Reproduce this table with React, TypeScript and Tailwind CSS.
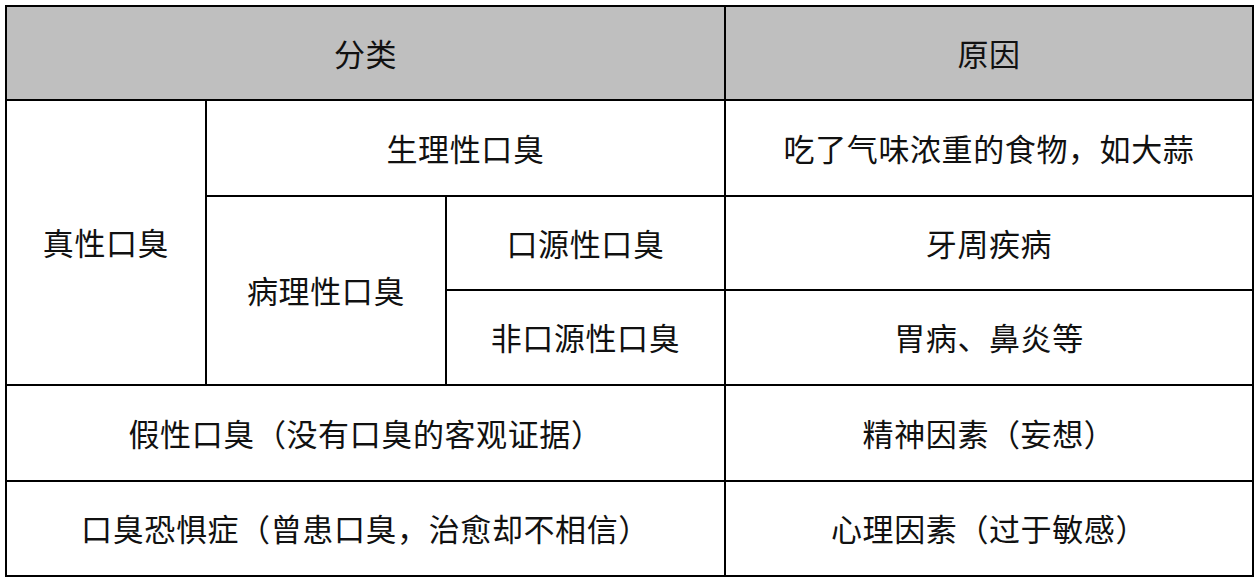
import React from "react";

const cell = "bg-white flex items-center justify-center text-[31px] tracking-[0.6px] text-[#111]";
const head = "bg-[#bfbfbf] flex items-center justify-center text-[31px] tracking-[0.6px] text-[#111]";

export default function App() {
  return (
    <div className="w-[1260px] h-[582px] bg-white p-[5px]" style={{ fontFamily: '"Noto Sans CJK SC", "Noto Sans", sans-serif' }}>
      <div className="grid w-[1249px] bg-black p-[2px] gap-[2px] grid-cols-[198px_238px_277px_526px] grid-rows-[92px_94px_92px_93px_94px_93px]">
        <div className={`${head} col-span-3`}>分类</div>
        <div className={head}>原因</div>

        <div className={`${cell} row-span-3`}>真性口臭</div>
        <div className={`${cell} col-span-2`}>生理性口臭</div>
        <div className={cell}>吃了气味浓重的食物，如大蒜</div>

        <div className={`${cell} row-span-2`}>病理性口臭</div>
        <div className={cell}>口源性口臭</div>
        <div className={cell}>牙周疾病</div>

        <div className={cell}>非口源性口臭</div>
        <div className={cell}>胃病、鼻炎等</div>

        <div className={`${cell} col-span-3`}>假性口臭（没有口臭的客观证据）</div>
        <div className={cell}>精神因素（妄想）</div>

        <div className={`${cell} col-span-3`}>口臭恐惧症（曾患口臭，治愈却不相信）</div>
        <div className={cell}>心理因素（过于敏感）</div>
      </div>
    </div>
  );
}
